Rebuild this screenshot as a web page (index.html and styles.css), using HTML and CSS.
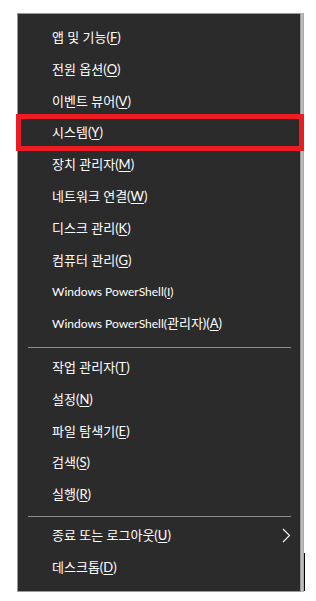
FILE: index.html
```html
<html>
	<head>
		<title>빠른 링크 메뉴</title>
		<meta charset="UTF-8">
		<meta name="viewport" content="width=device-width, initial-scale=1">
		<link rel="stylesheet" href="styles.css">
	</head>
	<body>
		<div class="backdrop"></div>
		<div id="menu">
			<div class="item">앱 및 기능(<u>F</u>)</div>
			<div class="item">전원 옵션(<u>O</u>)</div>
			<div class="item">이벤트 뷰어(<u>V</u>)</div>
			<div class="item">시스템(<u>Y</u>)</div>
			<div class="item">장치 관리자(<u>M</u>)</div>
			<div class="item">네트워크 연결(<u>W</u>)</div>
			<div class="item">디스크 관리(<u>K</u>)</div>
			<div class="item">컴퓨터 관리(<u>G</u>)</div>
			<div class="item"><span class="latin">Windows PowerShell(<u>I</u>)</span></div>
			<div class="item"><span class="latin">Windows PowerShell(</span>관리자)(<u>A</u>)</div>
			<div class="sep sep1"></div>
			<div class="item">작업 관리자(<u>T</u>)</div>
			<div class="item">설정(<u>N</u>)</div>
			<div class="item">파일 탐색기(<u>E</u>)</div>
			<div class="item">검색(<u>S</u>)</div>
			<div class="item">실행(<u>R</u>)</div>
			<div class="sep sep2"></div>
			<div class="item sub">
				<span>종료 또는 로그아웃(<u>U</u>)</span>
				<svg class="arrow" width="9" height="15" viewBox="0 0 9 15">
					<polyline points="1,1 7.5,7.5 1,14" fill="none" stroke="#f2f2f2" stroke-width="1.2" />
				</svg>
			</div>
			<div class="item">데스크톱(<u>D</u>)</div>
		</div>
		<div class="highlight"></div>
	</body>
</html>
```

FILE: styles.css
```css
body {
	margin: 0;
	background: #fff;
	font-family: "Lato", "Noto Sans CJK KR", sans-serif;
	font-size: 13px;
	color: #fff;
}
#menu {
	position: relative;
	margin: 13px 0 0 17px;
	width: 282px;
	padding: 8px 0 7px 0;
	background: #2b2b2b;
	border: 1px solid #999;
	box-shadow: 2px 0 0 #bdbdbd, 3px 0 0 #a8a8a8;
}
.item {
	height: 31.8px;
	line-height: 31.8px;
	padding-left: 34px;
	padding-right: 9px;
	white-space: nowrap;
}
.item u {
	text-underline-offset: 2px;
}
.latin {
	font-size: 12px;
}
.sub {
	display: flex;
	align-items: center;
	justify-content: space-between;
}
.arrow {
	display: block;
}
.sep {
	height: 1px;
	background: #8c8c8c;
	margin-left: 10px;
	margin-right: 9px;
}
.sep1 {
	margin-top: 7px;
	margin-bottom: 4px;
}
.sep2 {
	margin-top: 5px;
	margin-bottom: 3px;
}
.highlight {
	position: absolute;
	left: 16px;
	top: 114px;
	width: 278px;
	height: 27px;
	border: 5px solid #ec1c24;
}
.backdrop {
	position: absolute;
	left: 302px;
	top: 553px;
	width: 3px;
	height: 38px;
	background: #000;
}
```
